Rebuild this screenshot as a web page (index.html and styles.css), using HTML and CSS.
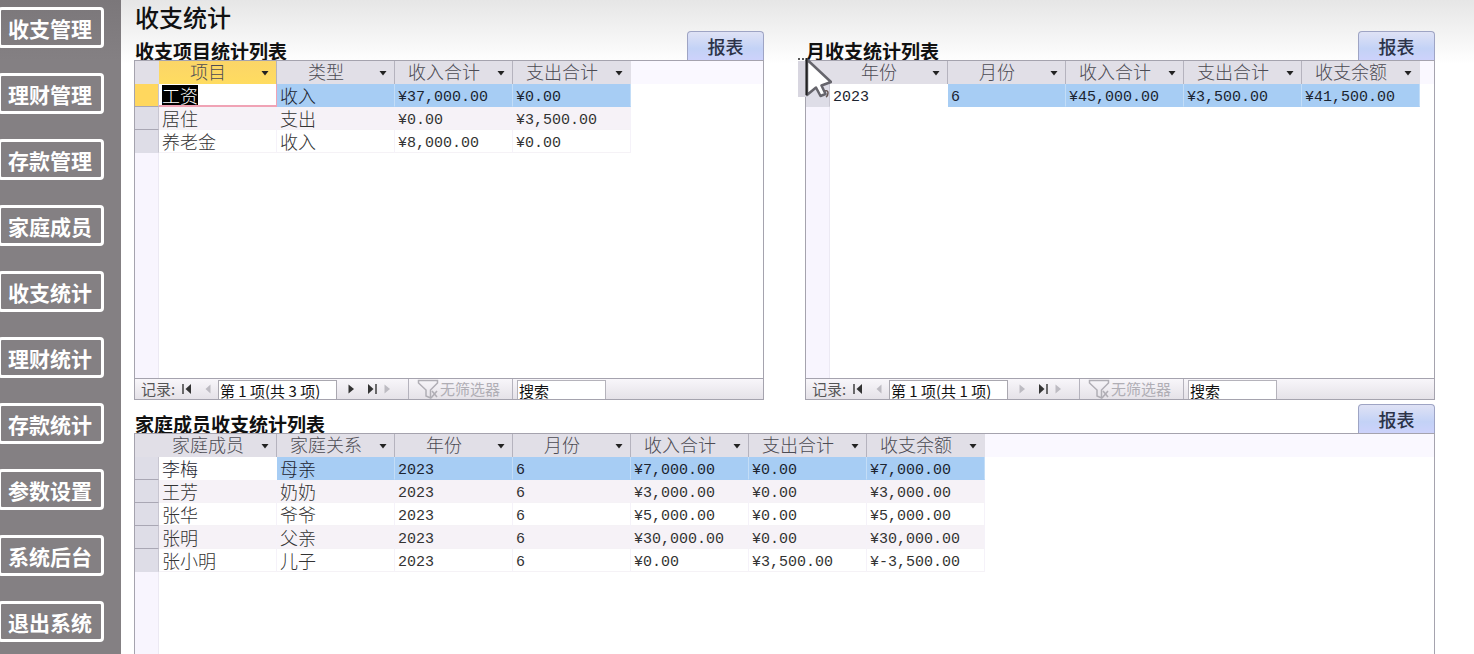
FILE: index.html
```html
<!DOCTYPE html>
<html lang="zh-CN">
<head>
<meta charset="utf-8">
<title>收支统计</title>
<link rel="stylesheet" href="styles.css">
</head>
<body>
<svg class="defs" aria-hidden="true">
  <symbol id="first" viewBox="0 0 12 12"><path d="M2 1v10" stroke="currentColor" stroke-width="1.4"/><path d="M10 1v10L4.500 6z" fill="currentColor"/></symbol>
  <symbol id="prev" viewBox="0 0 12 12"><path d="M8.500 1.500v9L3.500 6z" fill="currentColor"/></symbol>
  <symbol id="next" viewBox="0 0 12 12"><path d="M3.500 1.500v9L9 6z" fill="currentColor"/></symbol>
  <symbol id="last" viewBox="0 0 12 12"><path d="M10 1v10" stroke="currentColor" stroke-width="1.400"/><path d="M2 1v10L7.500 6z" fill="currentColor"/></symbol>
  <symbol id="funnel" viewBox="0 0 22 20"><path d="M1.500 1.500h19v2.500l-7 7v8l-4.500-2v-6L1.500 4z" fill="none" stroke="currentColor" stroke-width="1.500"/><path d="M15 12l5 6M20 12l-6 7" stroke="currentColor" stroke-width="1.600"/></symbol>
  <symbol id="down" viewBox="0 0 8 5"><path d="M0.500 0h7L4 4.500z" fill="currentColor"/></symbol>
</svg>
<div class="app">
  <nav class="sidebar">
    <button class="menu">收支管理</button>
    <button class="menu">理财管理</button>
    <button class="menu">存款管理</button>
    <button class="menu">家庭成员</button>
    <button class="menu">收支统计</button>
    <button class="menu">理财统计</button>
    <button class="menu">存款统计</button>
    <button class="menu">参数设置</button>
    <button class="menu">系统后台</button>
    <button class="menu">退出系统</button>
  </nav>
  <main class="main">
    <h1 class="title">收支统计</h1>
    <div class="pair">
      <section class="panel">
        <header class="head"><h2 class="subtitle">收支项目统计列表</h2><button class="report">报表</button></header>
        <div class="sheet">
          <div class="area">
            <table class="grid">
              <colgroup><col class="sel"><col class="data" span="4"></colgroup>
              <thead><tr><th></th>
                <th class="picked"><div class="th">项目<button class="arrow" aria-label="项目"><svg><use href="#down"/></svg></button></div></th>
                <th><div class="th">类型<button class="arrow" aria-label="类型"><svg><use href="#down"/></svg></button></div></th>
                <th><div class="th">收入合计<button class="arrow" aria-label="收入合计"><svg><use href="#down"/></svg></button></div></th>
                <th><div class="th">支出合计<button class="arrow" aria-label="支出合计"><svg><use href="#down"/></svg></button></div></th>
              </tr></thead>
              <tbody>
                <tr class="current"><th class="picked"></th><td class="editing"><span class="marked">工资</span></td><td>收入</td><td class="num">¥37,000.00</td><td class="num">¥0.00</td></tr>
                <tr><th></th><td>居住</td><td>支出</td><td class="num">¥0.00</td><td class="num">¥3,500.00</td></tr>
                <tr><th></th><td>养老金</td><td>收入</td><td class="num">¥8,000.00</td><td class="num">¥0.00</td></tr>
              </tbody>
            </table>
          </div>
          <div class="recordbar">
            <label class="reclabel" for="rec1">记录:</label>
            <button class="step" aria-label="第一条"><svg><use href="#first"/></svg></button>
            <button class="step" aria-label="上一条" disabled><svg><use href="#prev"/></svg></button>
            <input class="recno" id="rec1" value="第 1 项(共 3 项)">
            <button class="step" aria-label="下一条"><svg><use href="#next"/></svg></button>
            <button class="step" aria-label="最后一条"><svg><use href="#last"/></svg></button>
            <button class="step new" aria-label="新记录" disabled><svg><use href="#next"/></svg></button>
            <button class="filter" disabled><svg><use href="#funnel"/></svg>无筛选器</button>
            <input class="search" aria-label="搜索" value="搜索">
          </div>
        </div>
      </section>
      <section class="panel">
        <header class="head"><h2 class="subtitle">月收支统计列表</h2><button class="report">报表</button></header>
        <div class="sheet">
          <div class="area">
            <table class="grid">
              <colgroup><col class="sel"><col class="data" span="5"></colgroup>
              <thead><tr><th></th>
                <th><div class="th">年份<button class="arrow" aria-label="年份"><svg><use href="#down"/></svg></button></div></th>
                <th><div class="th">月份<button class="arrow" aria-label="月份"><svg><use href="#down"/></svg></button></div></th>
                <th><div class="th">收入合计<button class="arrow" aria-label="收入合计"><svg><use href="#down"/></svg></button></div></th>
                <th><div class="th">支出合计<button class="arrow" aria-label="支出合计"><svg><use href="#down"/></svg></button></div></th>
                <th><div class="th">收支余额<button class="arrow" aria-label="收支余额"><svg><use href="#down"/></svg></button></div></th>
              </tr></thead>
              <tbody>
                <tr class="current"><th></th><td class="num">2023</td><td class="num">6</td><td class="num">¥45,000.00</td><td class="num">¥3,500.00</td><td class="num">¥41,500.00</td></tr>
              </tbody>
            </table>
          </div>
          <div class="recordbar">
            <label class="reclabel" for="rec2">记录:</label>
            <button class="step" aria-label="第一条"><svg><use href="#first"/></svg></button>
            <button class="step" aria-label="上一条" disabled><svg><use href="#prev"/></svg></button>
            <input class="recno" id="rec2" value="第 1 项(共 1 项)">
            <button class="step" aria-label="下一条" disabled><svg><use href="#next"/></svg></button>
            <button class="step" aria-label="最后一条"><svg><use href="#last"/></svg></button>
            <button class="step new" aria-label="新记录" disabled><svg><use href="#next"/></svg></button>
            <button class="filter" disabled><svg><use href="#funnel"/></svg>无筛选器</button>
            <input class="search" aria-label="搜索" value="搜索">
          </div>
          <svg class="cursor" viewBox="0 0 34 42" aria-hidden="true">
            <path d="M0 3h8v36H0z" fill="#d8d6e0"/>
            <path d="M0 1h2M4 1h2" stroke="#222" stroke-width="1.500"/>
            <path d="M9 1.500L33 24l-9.500 3.500 4 8.500-5 2-4.500-8.500-9 7.500z" fill="#fff" stroke="#66656c" stroke-width="2.500" stroke-linejoin="round"/>
            <path d="M8.500 0v37" stroke="#222" stroke-width="2"/>
            <path d="M27 33q3-1 3 2t-2 4" fill="none" stroke="#655552" stroke-width="1.500"/>
          </svg>
        </div>
      </section>
    </div>
    <section class="panel family">
      <header class="head"><h2 class="subtitle">家庭成员收支统计列表</h2><button class="report">报表</button></header>
      <div class="sheet open">
        <div class="area">
          <table class="grid">
            <colgroup><col class="sel"><col class="data" span="7"></colgroup>
            <thead><tr><th></th>
              <th><div class="th">家庭成员<button class="arrow" aria-label="家庭成员"><svg><use href="#down"/></svg></button></div></th>
              <th><div class="th">家庭关系<button class="arrow" aria-label="家庭关系"><svg><use href="#down"/></svg></button></div></th>
              <th><div class="th">年份<button class="arrow" aria-label="年份"><svg><use href="#down"/></svg></button></div></th>
              <th><div class="th">月份<button class="arrow" aria-label="月份"><svg><use href="#down"/></svg></button></div></th>
              <th><div class="th">收入合计<button class="arrow" aria-label="收入合计"><svg><use href="#down"/></svg></button></div></th>
              <th><div class="th">支出合计<button class="arrow" aria-label="支出合计"><svg><use href="#down"/></svg></button></div></th>
              <th><div class="th">收支余额<button class="arrow" aria-label="收支余额"><svg><use href="#down"/></svg></button></div></th>
            </tr></thead>
            <tbody>
              <tr class="current"><th></th><td>李梅</td><td>母亲</td><td class="num">2023</td><td class="num">6</td><td class="num">¥7,000.00</td><td class="num">¥0.00</td><td class="num">¥7,000.00</td></tr>
              <tr><th></th><td>王芳</td><td>奶奶</td><td class="num">2023</td><td class="num">6</td><td class="num">¥3,000.00</td><td class="num">¥0.00</td><td class="num">¥3,000.00</td></tr>
              <tr><th></th><td>张华</td><td>爷爷</td><td class="num">2023</td><td class="num">6</td><td class="num">¥5,000.00</td><td class="num">¥0.00</td><td class="num">¥5,000.00</td></tr>
              <tr><th></th><td>张明</td><td>父亲</td><td class="num">2023</td><td class="num">6</td><td class="num">¥30,000.00</td><td class="num">¥0.00</td><td class="num">¥30,000.00</td></tr>
              <tr><th></th><td>张小明</td><td>儿子</td><td class="num">2023</td><td class="num">6</td><td class="num">¥0.00</td><td class="num">¥3,500.00</td><td class="num">¥-3,500.00</td></tr>
            </tbody>
          </table>
        </div>
      </div>
    </section>
  </main>
</div>
</body>
</html>
```

FILE: styles.css
```css
* { box-sizing: border-box; }
body { margin: 0; font-family: "Noto Sans CJK SC", sans-serif; font-size: 18px; color: #333; background: #fff; }
button, input { font-family: inherit; margin: 0; padding: 0; border: 0; border-radius: 0; background: none; }
h1, h2 { margin: 0; }
.defs { display: none; }
.app { display: flex; height: 100vh; overflow: hidden; }

.sidebar { flex: 0 0 121px; display: flex; flex-direction: column; align-items: flex-start; gap: 25px; padding-top: 7px; overflow: hidden; background: linear-gradient(#7b777a, #848083 60px); }
.menu { flex: none; width: 106px; height: 41px; margin-left: -2px; padding-right: 2px; border: 3px solid #fff; border-radius: 4px; color: #fff; font-size: 21px; font-weight: 700; line-height: 32px; white-space: nowrap; }

.main { flex: 1; min-width: 0; display: flex; flex-direction: column; padding: 2px 39px 0 13px; background: linear-gradient(#e6e6e6, #fff 64px); }
.title { padding-left: 1px; font-size: 24px; line-height: 29px; font-weight: 500; color: #111; }
.pair { display: grid; grid-template-columns: 1fr 1fr; gap: 41px; }
.panel { min-width: 0; display: flex; flex-direction: column; }
.family { flex: 1; margin-top: 4px; }
.head { display: flex; justify-content: space-between; align-items: flex-end; height: 29px; }
.subtitle { padding-left: 1px; font-size: 19px; line-height: 19px; font-weight: 700; color: #111; }
.report { width: 77px; height: 29px; border: 1px solid #9ea4c4; border-bottom: 0; border-radius: 4px 4px 0 0; background: linear-gradient(#dfe2f5, #c3d2f6 60%, #cdd2fb); color: #2c3348; font-size: 18px; font-weight: 500; line-height: 26px; }

.sheet { position: relative; display: flex; flex-direction: column; min-height: 340px; border: 1px solid #a5a3ae; background: #fff; }
.open { flex: 1; min-height: 0; border-bottom: 0; }
.area { flex: 1; background: linear-gradient(#faf8ff, #faf8ff) 0 0 / 100% 23px no-repeat, linear-gradient(90deg, #f8f5fe 23px, #ece9f3 23px 24px, #fff 24px); }

.grid { table-layout: fixed; width: 0; border-spacing: 0; }
.sel { width: 24px; }
.data { width: 118px; }
.grid tr { height: 23px; }
.grid th, .grid td { height: 23px; padding: 0; font-weight: 300; white-space: nowrap; }
.grid thead th { background: #e1dfe7; color: #4c4b53; border-right: 1px solid #b5b3be; }
.grid thead th:first-child, .grid thead th:last-child { border-right-color: #e1dfe7; }
.grid thead .picked { background: linear-gradient(#fbd568, #ffdc60); }
.th { display: flex; justify-content: center; align-items: center; position: relative; height: 23px; padding-right: 19px; padding-bottom: 2px; line-height: 21px; }
.arrow { position: absolute; right: 7px; top: 10px; width: 8px; height: 5px; color: #222; }
.arrow svg { display: block; width: 8px; height: 5px; }
.grid tbody th { background: #dedde7; border-bottom: 1px solid #a9a7b4; border-right: 1px solid #c8c6d1; }
.grid tbody tr:last-child th { border-bottom-color: #dedde7; }
.grid tbody .picked { background: #ffd75e; }
.grid td { padding-left: 3px; line-height: 22px; border-right: 1px solid #f5f2f9; border-bottom: 1px solid #f5f2f6; background: #fff; }
.grid tbody tr:nth-child(even) td { background: #f6f2f7; }
.grid .current td { background: #a7cdf4; border-right-color: #c3ddf7; border-bottom-color: #a7cdf4; color: #1c2430; }
.grid .current td:nth-child(2) { background: #fff; border-color: #fff; }
.grid .current td.editing:nth-child(2) { border: solid #f0a3b5; border-width: 0 1px 2px 0; line-height: 20px; }
.marked { display: inline-block; height: 20px; background: #000; color: #fff; vertical-align: top; }
.grid .num { font-family: "Liberation Mono", "Noto Sans CJK SC", monospace; font-size: 15px; font-weight: 400; padding-top: 5px; line-height: 17px; }

.recordbar { display: flex; align-items: center; height: 21px; border-top: 1px solid #a5a3ae; background: linear-gradient(#f8f6fa, #e5e2e8); overflow: hidden; font-size: 15px; }
.reclabel { width: 41px; padding-left: 6px; line-height: 20px; color: #555; white-space: nowrap; }
.step { width: 21px; height: 20px; color: #333; display: flex; align-items: center; justify-content: center; }
.step svg { width: 12px; height: 12px; }
.step:disabled { color: #bdbbc2; }
.recno { width: 119px; height: 19px; margin-right: 3px; align-self: flex-end; border: 1px solid #aaa8b0; border-bottom: 0; padding-left: 1px; background: #fff; font-size: 15px; line-height: 18px; color: #111; }
.new { width: 9px; margin-right: 17px; }
.new svg { flex: none; }
.filter { display: flex; align-items: center; gap: 1px; width: 105px; height: 20px; padding-left: 8px; border: solid #b5b3bd; border-width: 0 1px; color: #b0aeb5; font-size: 15px; line-height: 20px; white-space: nowrap; }
.filter svg { width: 22px; height: 20px; flex: none; }
.search { width: 89px; height: 19px; margin-left: 4px; align-self: flex-end; border: 1px solid #b5b3bb; border-bottom: 0; padding-left: 1px; background: #fff; font-size: 15px; line-height: 18px; color: #111; }
.cursor { position: absolute; left: -8px; top: -3px; width: 34px; height: 42px; }
```
